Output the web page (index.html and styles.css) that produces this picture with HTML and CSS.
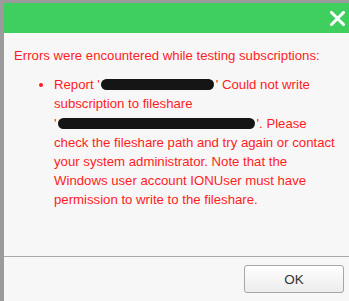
FILE: index.html
```html
<!DOCTYPE html>
<html>
<head>
<meta charset="utf-8">
<link rel="stylesheet" href="styles.css">
</head>
<body>
<div class="page">
  <div class="dialog">
    <div class="header">
      <span class="close">
        <svg width="15" height="15" viewBox="0 0 15 15"><path d="M1.5 1.5 L13.5 13.5 M13.5 1.5 L1.5 13.5" stroke="#fff" stroke-width="3" stroke-linecap="square"/></svg>
      </span>
    </div>
    <div class="content">
      <div class="title">Errors were encountered while testing subscriptions:</div>
      <ul class="errors">
        <li>Report '<span class="redact r1"></span>' Could not write subscription to fileshare <span class="nowrap">'<span class="redact r2"></span>'.</span> Please check the fileshare path and try again or contact your system administrator. Note that the Windows user account IONUser must have permission to write to the fileshare.</li>
      </ul>
    </div>
    <div class="footer">
      <button class="ok">OK</button>
    </div>
  </div>
</div>
</body>
</html>
```
FILE: styles.css
```css
html, body {
  margin: 0;
  padding: 0;
  background: #9b9b9b;
  overflow: hidden;
}
.page {
  padding: 3px 0 0 4px;
  height: 301px;
  box-sizing: border-box;
}
.dialog {
  width: 360px;
  background: #f7f7f7;
  font-family: "Liberation Sans", Arial, sans-serif;
}
.header {
  height: 30px;
  background: #3ecf5e;
  display: flex;
  align-items: center;
  padding-left: 326px;
  box-sizing: border-box;
}
.close {
  display: flex;
}
.content {
  height: 223px;
  box-sizing: border-box;
  padding: 13px 10px 0 10px;
  color: #ff1c1c;
  font-size: 13.2px;
  line-height: 19.2px;
}
.errors {
  margin: 10px 0 0 0;
  padding: 0 0 0 40px;
  width: 285px;
}
.nowrap {
  white-space: nowrap;
}
.redact {
  display: inline-block;
  height: 11px;
  margin: 0 1.5px;
  background: #151515;
  border-radius: 6px;
  vertical-align: -1px;
  filter: blur(0.6px);
}
.r1 { width: 113px; }
.r2 { width: 197px; }
.footer {
  border-top: 1px solid #a9a9a9;
  height: 48px;
  padding: 8px 0 0 240px;
  box-sizing: border-box;
}
.ok {
  width: 100px;
  height: 28px;
  border: 1px solid #a6a6a6;
  border-radius: 3px;
  background: linear-gradient(#ffffff, #ececec);
  font-family: "Liberation Sans", Arial, sans-serif;
  font-size: 13.5px;
  color: #333;
  padding: 0;
}
```
